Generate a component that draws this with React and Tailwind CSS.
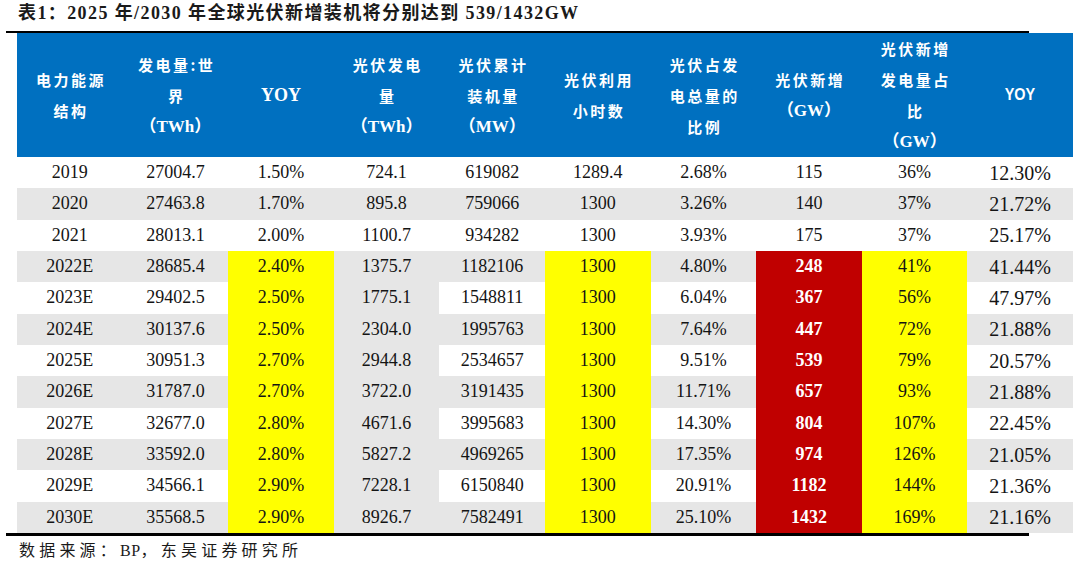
import React from 'react';

const rows = [
  ['2019', '27004.7', '1.50%', '724.1', '619082', '1289.4', '2.68%', '115', '36%', '12.30%'],
  ['2020', '27463.8', '1.70%', '895.8', '759066', '1300', '3.26%', '140', '37%', '21.72%'],
  ['2021', '28013.1', '2.00%', '1100.7', '934282', '1300', '3.93%', '175', '37%', '25.17%'],
  ['2022E', '28685.4', '2.40%', '1375.7', '1182106', '1300', '4.80%', '248', '41%', '41.44%'],
  ['2023E', '29402.5', '2.50%', '1775.1', '1548811', '1300', '6.04%', '367', '56%', '47.97%'],
  ['2024E', '30137.6', '2.50%', '2304.0', '1995763', '1300', '7.64%', '447', '72%', '21.88%'],
  ['2025E', '30951.3', '2.70%', '2944.8', '2534657', '1300', '9.51%', '539', '79%', '20.57%'],
  ['2026E', '31787.0', '2.70%', '3722.0', '3191435', '1300', '11.71%', '657', '93%', '21.88%'],
  ['2027E', '32677.0', '2.80%', '4671.6', '3995683', '1300', '14.30%', '804', '107%', '22.45%'],
  ['2028E', '33592.0', '2.80%', '5827.2', '4969265', '1300', '17.35%', '974', '126%', '21.05%'],
  ['2029E', '34566.1', '2.90%', '7228.1', '6150840', '1300', '20.91%', '1182', '144%', '21.36%'],
  ['2030E', '35568.5', '2.90%', '8926.7', '7582491', '1300', '25.10%', '1432', '169%', '21.16%'],
];

const headers = [
  ['电力能源', '结构'],
  ['发电量:世', '界', '（TWh）'],
  null,
  ['光伏发电', '量', '（TWh）'],
  ['光伏累计', '装机量', '（MW）'],
  ['光伏利用', '小时数'],
  ['光伏占发', '电总量的', '比例'],
  ['光伏新增', '（GW）'],
  ['光伏新增', '发电量占', '比', '（GW）'],
  null,
];

const serif = "font-['Liberation_Serif','Noto_Sans_CJK_SC',serif]";

const cellBg = (r, c) => {
  const hot = r >= 3;
  if (hot && (c === 2 || c === 5 || c === 8)) return 'bg-[#ffff00]';
  if (hot && c === 7) return 'bg-[#c00000] text-white font-bold';
  if (hot && c === 3) return 'bg-[#e6e6e6]';
  return r % 2 === 1 ? 'bg-[#e6e6e6]' : 'bg-white';
};

export default function App() {
  return (
    <div className={`w-[1080px] h-[562px] bg-white overflow-hidden ${serif}`}>
      {/* title */}
      <div className="pt-[1px] pl-[18px] h-[31px] text-[18px] leading-[24px] font-bold tracking-[1.4px] text-[#1a1a1a]">
        表1：2025 年/2030 年全球光伏新增装机将分别达到 539/1432GW
      </div>
      <div className="ml-[6px] w-[1023px] h-[2px] bg-black" />

      <div className="ml-[17px] w-[1056px]">
        <div className="grid grid-cols-10 h-[124px] bg-[#0070c0] text-white">
          {headers.map((h, i) => (
            <div key={i} className="flex flex-col items-center justify-center">
              {h === null ? (
                i === 2 ? (
                  <span className="text-[18px] font-bold">YOY</span>
                ) : (
                  <span className="text-[17px] font-bold font-['Liberation_Sans',sans-serif] scale-x-[0.85]">YOY</span>
                )
              ) : (
                h.map((line, j) => (
                  <span
                    key={j}
                    className={`leading-[31px] font-bold ${
                      line.startsWith('（')
                        ? 'text-[17px] tracking-[0px]'
                        : "text-[15px] tracking-[2.5px] pl-[2.5px] font-['Noto_Sans_CJK_SC',sans-serif]"
                    }`}
                  >
                    {line}
                  </span>
                ))
              )}
            </div>
          ))}
        </div>

        {rows.map((row, r) => (
          <div key={r} className="grid grid-cols-10 h-[31.33px] text-[#141414]">
            {row.map((v, c) => (
              <div
                key={c}
                className={`flex items-center justify-center ${cellBg(r, c)} ${
                  c === 9 ? 'text-[20px]' : 'text-[18px]'
                }`}
              >
                {v}
              </div>
            ))}
          </div>
        ))}
      </div>

      <div className="ml-[6px] w-[1023px] h-[3px] bg-black" />
      <div className="mt-[3px] pl-[19px] text-[16px] leading-[24px] tracking-[4.2px] text-[#1a1a1a]">
        数据来源：<span className="tracking-[0.5px]">BP</span>，东吴证券研究所
      </div>
    </div>
  );
}
